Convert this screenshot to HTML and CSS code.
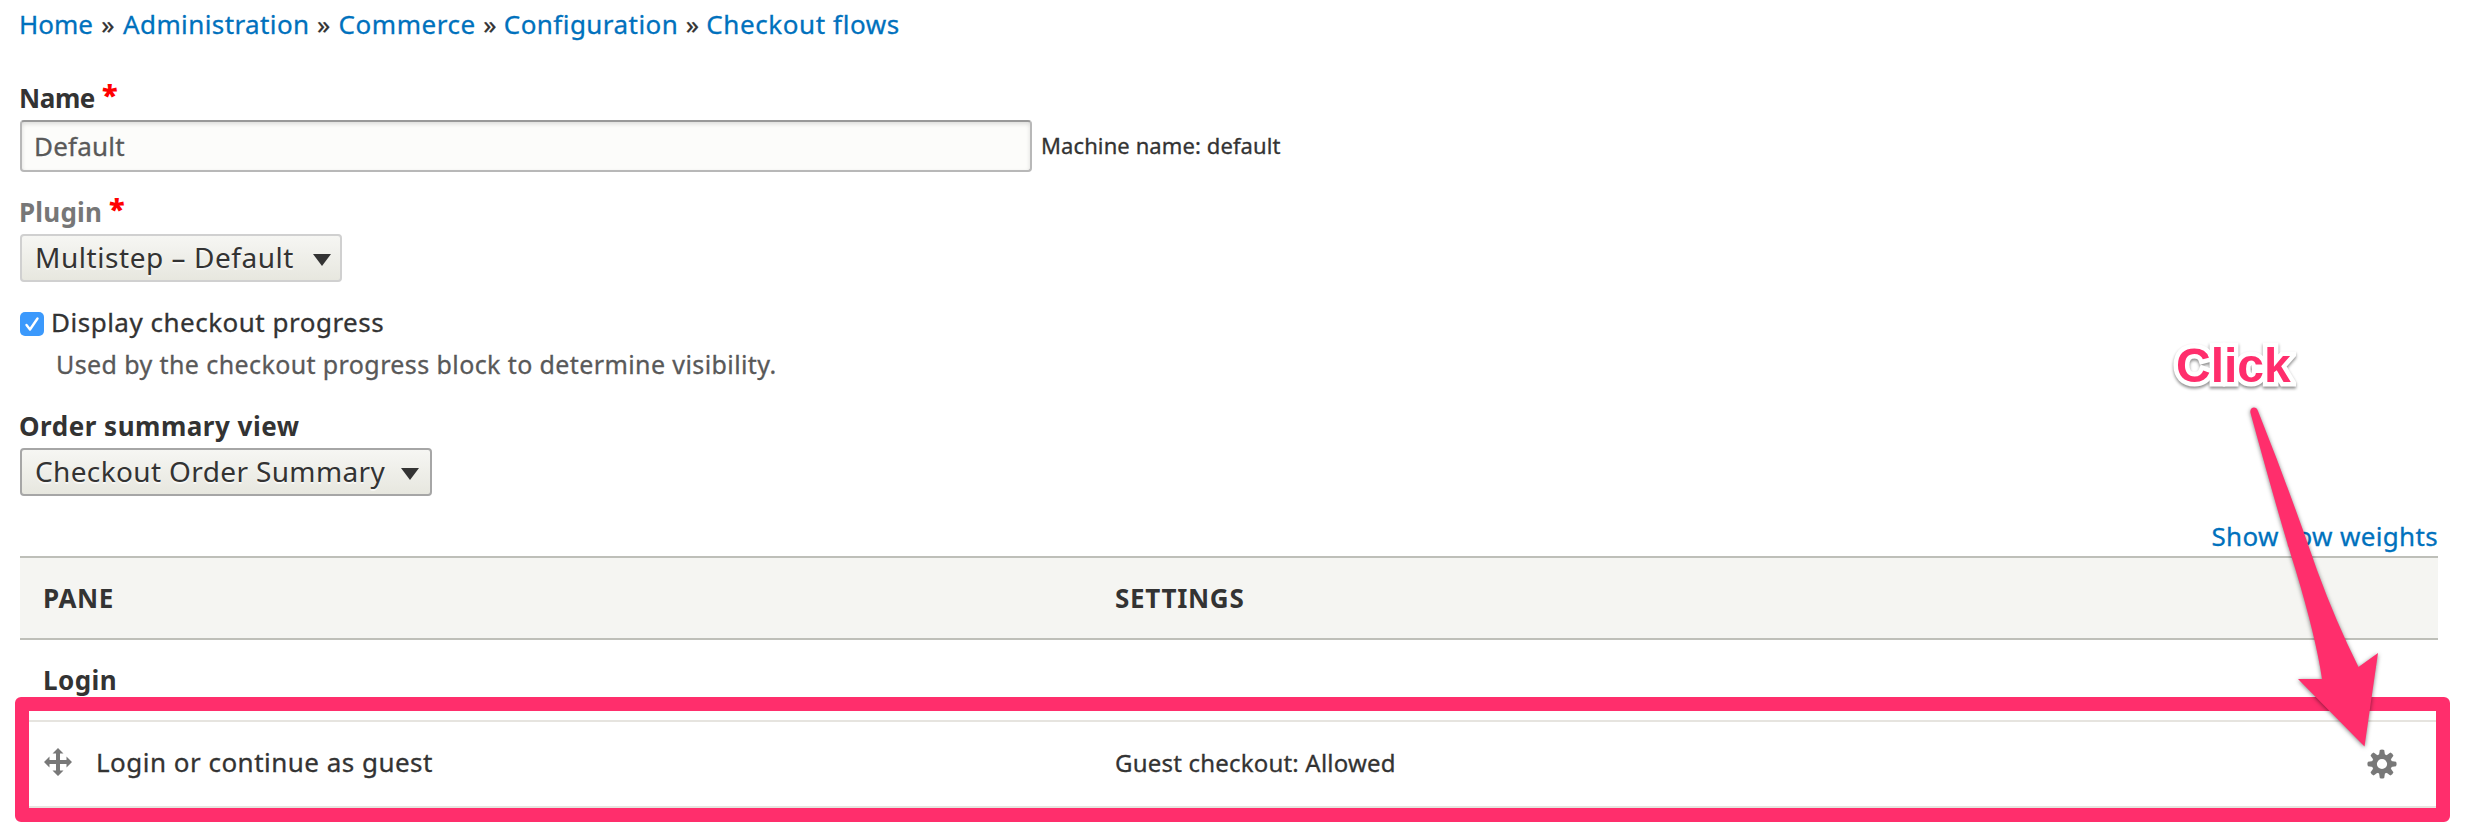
FILE: index.html
```html
<!DOCTYPE html>
<html lang="en">
<head>
<meta charset="utf-8">
<title>Checkout flow</title>
<link rel="stylesheet" href="styles.css">
</head>
<body>
<nav class="breadcrumb"><a class="c1">Home</a><i>»</i><a class="c2">Administration</a><i>»</i><a class="c3">Commerce</a><i>»</i><a class="c4">Configuration</a><i>»</i><a class="c5">Checkout flows</a></nav>
<form class="form">
  <div class="label name"><span class="t-name">Name</span><b class="req">*</b></div>
  <div class="name-row"><div class="input"><span class="t-default">Default</span></div><span class="machine">Machine name: default</span></div>
  <div class="label plugin"><span class="t-plugin">Plugin</span><b class="req">*</b></div>
  <div class="select disabled"><span class="t-multi">Multistep – Default</span><svg width="18" height="12" viewBox="0 0 18 12"><path d="M0 0H18L9 12Z" fill="#333"/></svg></div>
  <div class="check-row"><span class="checkbox"><svg width="24" height="24" viewBox="0 0 24 24"><path d="M6.500 13L10 17.500L17.500 6.500" fill="none" stroke="#fff" stroke-width="2.400" stroke-linecap="round" stroke-linejoin="round"/></svg></span><span class="t-display">Display checkout progress</span></div>
  <div class="desc"><span class="t-desc">Used by the checkout progress block to determine visibility.</span></div>
  <div class="label order"><span class="t-order">Order summary view</span></div>
  <div class="select wide"><span class="t-summary">Checkout Order Summary</span><svg width="18" height="12" viewBox="0 0 18 12"><path d="M0 0H18L9 12Z" fill="#333"/></svg></div>
</form>
<div class="weights"><a class="t-weights">Show row weights</a></div>
<div class="table">
  <div class="tr head"><div class="pane"><span class="t-pane">PANE</span></div><div class="settings"><span class="t-settings">SETTINGS</span></div></div>
  <div class="tr region"><div class="pane"><span class="t-login">Login</span></div></div>
  <div class="tr item"><div class="pane"><svg class="move" width="28" height="28" viewBox="0 0 28 28"><path fill="#787878" d="M14 0L19.500 5.500H16V12H22.500V8.500L28 14L22.500 19.500V16H16V22.500H19.500L14 28L8.500 22.500H12V16H5.500V19.500L0 14L5.500 8.500V12H12V5.500H8.500Z"/></svg><span class="t-guest">Login or continue as guest</span></div><div class="settings"><span class="t-allowed">Guest checkout: Allowed</span></div>
  <svg class="gear" width="30" height="30" viewBox="-15 -15 30 30"><g fill="#787878"><path id="tooth" d="M-3 -9L-2.200 -14Q0 -15.200 2.200 -14L3 -9Z"/><use href="#tooth" transform="rotate(45)"/><use href="#tooth" transform="rotate(90)"/><use href="#tooth" transform="rotate(135)"/><use href="#tooth" transform="rotate(180)"/><use href="#tooth" transform="rotate(225)"/><use href="#tooth" transform="rotate(270)"/><use href="#tooth" transform="rotate(315)"/></g><circle r="7.600" fill="none" stroke="#787878" stroke-width="5"/></svg></div>
</div>
<div class="frame"></div>
<svg class="arrow" width="150" height="360" viewBox="2240 400 150 360"><path fill="#ff2e6c" d="M2250.500 413C2249 407 2256.500 405.500 2258 411Q2288 486 2317 570Q2336 622 2358.500 667L2378 653L2364.500 746.500L2298 679H2322Q2316 638 2295.600 570Q2282 528 2250.500 413Z"/></svg>
<div class="callout">Click</div>
</body>
</html>
```
FILE: styles.css
```css
* { box-sizing: border-box; }
body { margin: 0; padding: 8px 32px 0 20px; width: 2470px; height: 832px; overflow: hidden; position: relative; background: #fff; color: #333; font: 26px/32px "Noto Sans", "Open Sans", sans-serif; white-space: nowrap; -webkit-text-stroke: 0.3px; }
a { color: #0071bd; }
.breadcrumb { display: flex; height: 32px; margin-left: -1px; }
.breadcrumb i { font-style: normal; width: 28px; text-align: center; }
.c1 { letter-spacing: 0; padding-right: 1px; }
.c2 { letter-spacing: .4px; margin-left: 1px; }
.c3 { letter-spacing: .55px; margin-left: 1px; }
.c4 { letter-spacing: .45px; }
.c5 { letter-spacing: .6px; }
.form { display: flex; flex-direction: column; align-items: flex-start; }
.label { font-weight: 700; display: flex; height: 32px; margin: 0 0 6px -1px; -webkit-text-stroke: 0; }
.name { margin-top: 42px; }
.plugin { margin-top: 24px; color: #777; }
.order { margin-top: 30px; }
.req { color: #f00; margin-left: 7px; font-size: 29px; line-height: 26px; }
.t-name { letter-spacing: -.4px; }
.t-plugin { letter-spacing: .2px; }
.t-order { letter-spacing: .51px; }
.name-row { display: flex; align-items: center; gap: 9px; height: 52px; }
.input { width: 1012px; height: 52px; border: 2px solid #b8b8b8; border-top-color: #999; border-radius: 4px; background: #fcfcfa; box-shadow: inset 0 2px 4px rgba(0,0,0,.13); color: #595959; padding: 8px 12px; letter-spacing: .2px; }
.machine { font-size: 22px; letter-spacing: .1px; padding-bottom: 2px; }
.select { display: flex; align-items: center; justify-content: space-between; height: 48px; border: 2px solid #a6a6a6; border-radius: 4px; background: linear-gradient(#f6f6f3, #e7e7df); padding: 0 11px 2px 13px; font-size: 28px; width: 322px; text-shadow: 0 2px #fff9; -webkit-text-stroke: 0; }
.select svg { margin-top: 5px; }
.select.disabled { border-color: #d0d0d0; padding-right: 9px; }
.select.wide { width: 412px; }
.t-multi { letter-spacing: .55px; }
.t-summary { letter-spacing: .36px; }
.check-row { display: flex; margin-top: 24px; gap: 7px; letter-spacing: .5px; }
.checkbox { width: 24px; height: 24px; margin-top: 6px; border-radius: 5px; background: #3b99fc; }
.checkbox svg { display: block; }
.desc { margin-top: 10px; padding-left: 36px; font-size: 25px; color: #595959; letter-spacing: .4px; }
.weights { margin-top: 24px; display: flex; justify-content: flex-end; height: 32px; letter-spacing: .34px; }
.table { margin-top: 4px; }
.tr { display: grid; grid-template-columns: 1072px 1fr auto; align-items: center; padding: 0 41px 0 23px; }
.head { height: 84px; background: #f5f5f2; border-top: 2px solid #bebfb9; border-bottom: 2px solid #bebfb9; font-weight: 700; -webkit-text-stroke: 0; }
.t-pane { letter-spacing: .6px; }
.t-settings { letter-spacing: .7px; }
.region { height: 80px; font-weight: 700; letter-spacing: .45px; -webkit-text-stroke: 0; }
.item { height: 88px; border-top: 2px solid #e6e4df; border-bottom: 2px solid #e6e4df; }
.item .pane, .item .settings { padding-bottom: 4px; }
.pane { display: flex; align-items: center; }
.move { margin: 0 24px 0 1px; }
.t-guest { letter-spacing: .48px; }
.t-allowed { font-size: 24px; letter-spacing: .2px; }
.frame { position: absolute; left: 15px; top: 697px; width: 2435px; height: 125px; border: 14px solid #ff2e6c; border-radius: 6px; }
.arrow { position: absolute; left: 2240px; top: 400px; filter: drop-shadow(0 1px 2px rgba(0,0,0,.5)); }
.callout { position: absolute; left: 2176px; top: 336px; font: 700 48px/60px "Liberation Sans", Arial, sans-serif; color: #ff2e6c; -webkit-text-stroke: 9px #fff; paint-order: stroke fill; filter: drop-shadow(0 2px 1.5px rgba(0,0,0,.45)); }
```
